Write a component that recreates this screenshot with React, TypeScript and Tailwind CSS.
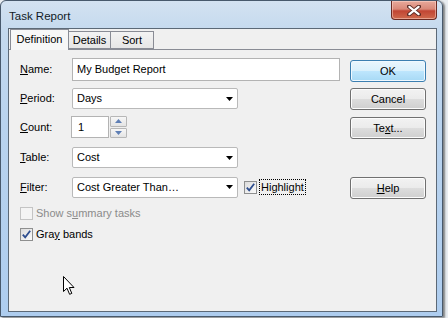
import type { ReactNode } from 'react';

// Win7 "Task Report" dialog, Definition tab

function Key({ children }: { children: ReactNode }) {
  return <span className="underline underline-offset-[1px]">{children}</span>;
}

function Combo({ value }: { value: string }) {
  return (
    <div className="flex h-[21px] w-[166px] items-center justify-between rounded-[2px] border border-[#b9b9b9] bg-white pl-[4px] pr-[4px]">
      <span>{value}</span>
      <svg width="7" height="4" viewBox="0 0 7 4">
        <path d="M0 0h7L3.5 4z" fill="#000" />
      </svg>
    </div>
  );
}

function Button({ children, primary }: { children: ReactNode; primary?: boolean }) {
  return (
    <button
      className={`flex h-[22px] w-[76px] items-center justify-center rounded-[3px] border text-black ${
        primary
          ? 'border-[#3c7fb1] bg-[linear-gradient(#eaf6fd_0%,#d9f0fc_50%,#bee6fd_50%,#a7d9f5_100%)] shadow-[inset_0_0_0_1px_#f0f9ff]'
          : 'border-[#707070] bg-[linear-gradient(#f2f2f2_0%,#ebebeb_50%,#dddddd_50%,#cfcfcf_100%)] shadow-[inset_0_0_0_1px_#fcfcfc]'
      }`}
    >
      {children}
    </button>
  );
}

function CheckBox({ checked, disabled }: { checked?: boolean; disabled?: boolean }) {
  return (
    <div
      className={`flex h-[13px] w-[13px] shrink-0 items-center justify-center border ${
        disabled ? 'border-[#c4c4c4] bg-[#f4f4f4]' : 'border-[#8e8f8f] bg-[linear-gradient(135deg,#dcdcdc,#fbfbfb)]'
      }`}
    >
      {checked && (
        <svg width="9" height="9" viewBox="0 0 9 9">
          <path d="M0.8 4.6 L3.2 7.4 L8.2 0.8" fill="none" stroke="#2e4e8f" strokeWidth="1.8" />
        </svg>
      )}
    </div>
  );
}

function Spinner() {
  return (
    <div className="ml-[1px] flex h-[22px] w-[17px] flex-col gap-[1px]">
      {['M0 4h7L3.5 0z', 'M0 0h7L3.5 4z'].map((d) => (
        <div
          key={d}
          className="flex flex-1 items-center justify-center rounded-[1px] border border-[#b7b7b7] bg-[linear-gradient(#f7f7f7,#e4e4e4)]"
        >
          <svg width="7" height="4" viewBox="0 0 7 4">
            <path d={d} fill="#5f7fb5" />
          </svg>
        </div>
      ))}
    </div>
  );
}

export default function App() {
  return (
    <div className="relative h-[318px] w-[448px] overflow-hidden bg-[#e9edf1] font-['Liberation_Sans',Arial,sans-serif] text-[11px] text-black">
      {/* window frame */}
      <div className="flex h-[317px] w-[443px] flex-col rounded-t-[6px] border border-[#48596c] bg-[linear-gradient(180deg,#d3e2f1_0%,#c4d9ee_10%,#b9d3ee_40%,#aecdef_100%)] shadow-[2px_1px_2px_rgba(0,0,0,0.45)]">
        <div className="flex h-[27px] items-start justify-between">
          <span className="pl-[8px] pt-[7px] text-[11.5px] text-[#111b27]">Task Report</span>
          <div className="mr-[5px] flex h-[19px] w-[46px] items-center justify-center rounded-b-[4px] border border-t-0 border-[#6b2a22] bg-[linear-gradient(#e8a99b_0%,#d98878_45%,#c14533_55%,#cf6a4d_100%)] shadow-[inset_0_0_0_1px_rgba(255,220,210,0.5)]">
            <svg width="14" height="11" viewBox="0 0 14 11">
              <path d="M2 1.5 L12 9.5 M12 1.5 L2 9.5" stroke="#5a2a24" strokeWidth="4" strokeLinecap="round" />
              <path d="M2.4 1.8 L11.6 9.2 M11.6 1.8 L2.4 9.2" stroke="#ffffff" strokeWidth="2.2" strokeLinecap="round" />
            </svg>
          </div>
        </div>

        {/* client area */}
        <div className="mb-[4px] ml-[7px] mr-[5px] flex flex-1 flex-col border border-[#5c6977] bg-[#f0f0f0]">
          {/* tabs */}
          <div className="flex h-[20px] items-end pl-[1px]">
            <div className="relative z-10 -mb-[1px] flex h-[21px] w-[59px] items-center justify-center border border-b-0 border-[#898c95] bg-[#f7f7f7] pb-[1px]">
              Definition
            </div>
            <div className="flex h-[18px] w-[42px] items-center justify-center border border-l-0 border-[#898c95] bg-[linear-gradient(#f3f3f3,#e6e6e6)]">
              Details
            </div>
            <div className="flex h-[18px] w-[43px] items-center justify-center border border-l-0 border-[#898c95] bg-[linear-gradient(#f3f3f3,#e6e6e6)]">
              Sort
            </div>
          </div>

          {/* panel */}
          <div className="flex flex-1 border-t border-[#898c95] pl-[11px]">
            <div className="flex w-[320px] flex-col">
              <div className="mt-[8px] flex h-[23px] items-center">
                <span className="w-[52px]">
                  <Key>N</Key>ame:
                </span>
                <div className="flex h-[23px] flex-1 items-center border border-[#b3b3b3] bg-white pl-[4px]">
                  My Budget Report
                </div>
              </div>
              <div className="mt-[7px] flex h-[21px] items-center">
                <span className="w-[52px]">
                  <Key>P</Key>eriod:
                </span>
                <Combo value="Days" />
              </div>
              <div className="mt-[7px] flex h-[22px] items-center">
                <span className="w-[51px]">
                  <Key>C</Key>ount:
                </span>
                <div className="flex h-[22px] w-[38px] items-center border border-[#b3b3b3] bg-white pl-[6px]">1</div>
                <Spinner />
              </div>
              <div className="mt-[9px] flex h-[21px] items-center">
                <span className="w-[52px]">
                  <Key>T</Key>able:
                </span>
                <Combo value="Cost" />
              </div>
              <div className="mt-[8px] flex h-[22px] items-center">
                <span className="w-[52px]">
                  <Key>F</Key>ilter:
                </span>
                <Combo value="Cost Greater Than…" />
                <div className="ml-[6px] flex items-center gap-[2px]">
                  <CheckBox checked />
                  <span className="border border-dotted border-black px-[1px] leading-[14px]">Highlight</span>
                </div>
              </div>
              <div className="mt-[9px] flex h-[13px] items-center gap-[3px] text-[#8b8b8b]">
                <CheckBox disabled />
                <span>
                  Show s<Key>u</Key>mmary tasks
                </span>
              </div>
              <div className="mt-[8px] flex h-[13px] items-center gap-[3px]">
                <CheckBox checked />
                <span>
                  Gra<Key>y</Key> bands
                </span>
              </div>
            </div>

            <div className="ml-[10px] flex flex-col">
              <div className="mt-[10px]">
                <Button primary>OK</Button>
              </div>
              <div className="mt-[6px]">
                <Button>Cancel</Button>
              </div>
              <div className="mt-[7px]">
                <Button>
                  Te<Key>x</Key>t...
                </Button>
              </div>
              <div className="mt-[38px]">
                <Button>
                  <Key>H</Key>elp
                </Button>
              </div>
            </div>
          </div>
        </div>
      </div>

      {/* mouse pointer */}
      <svg className="absolute left-[63px] top-[276px]" width="13" height="20" viewBox="0 0 13 20">
        <path
          d="M0.5 0.5 L0.5 15.5 L4 12.2 L6.6 18.3 L8.8 17.4 L6.3 11.5 L11 11.5 Z"
          fill="#fff"
          stroke="#000"
          strokeWidth="1"
          strokeLinejoin="round"
        />
      </svg>
    </div>
  );
}
